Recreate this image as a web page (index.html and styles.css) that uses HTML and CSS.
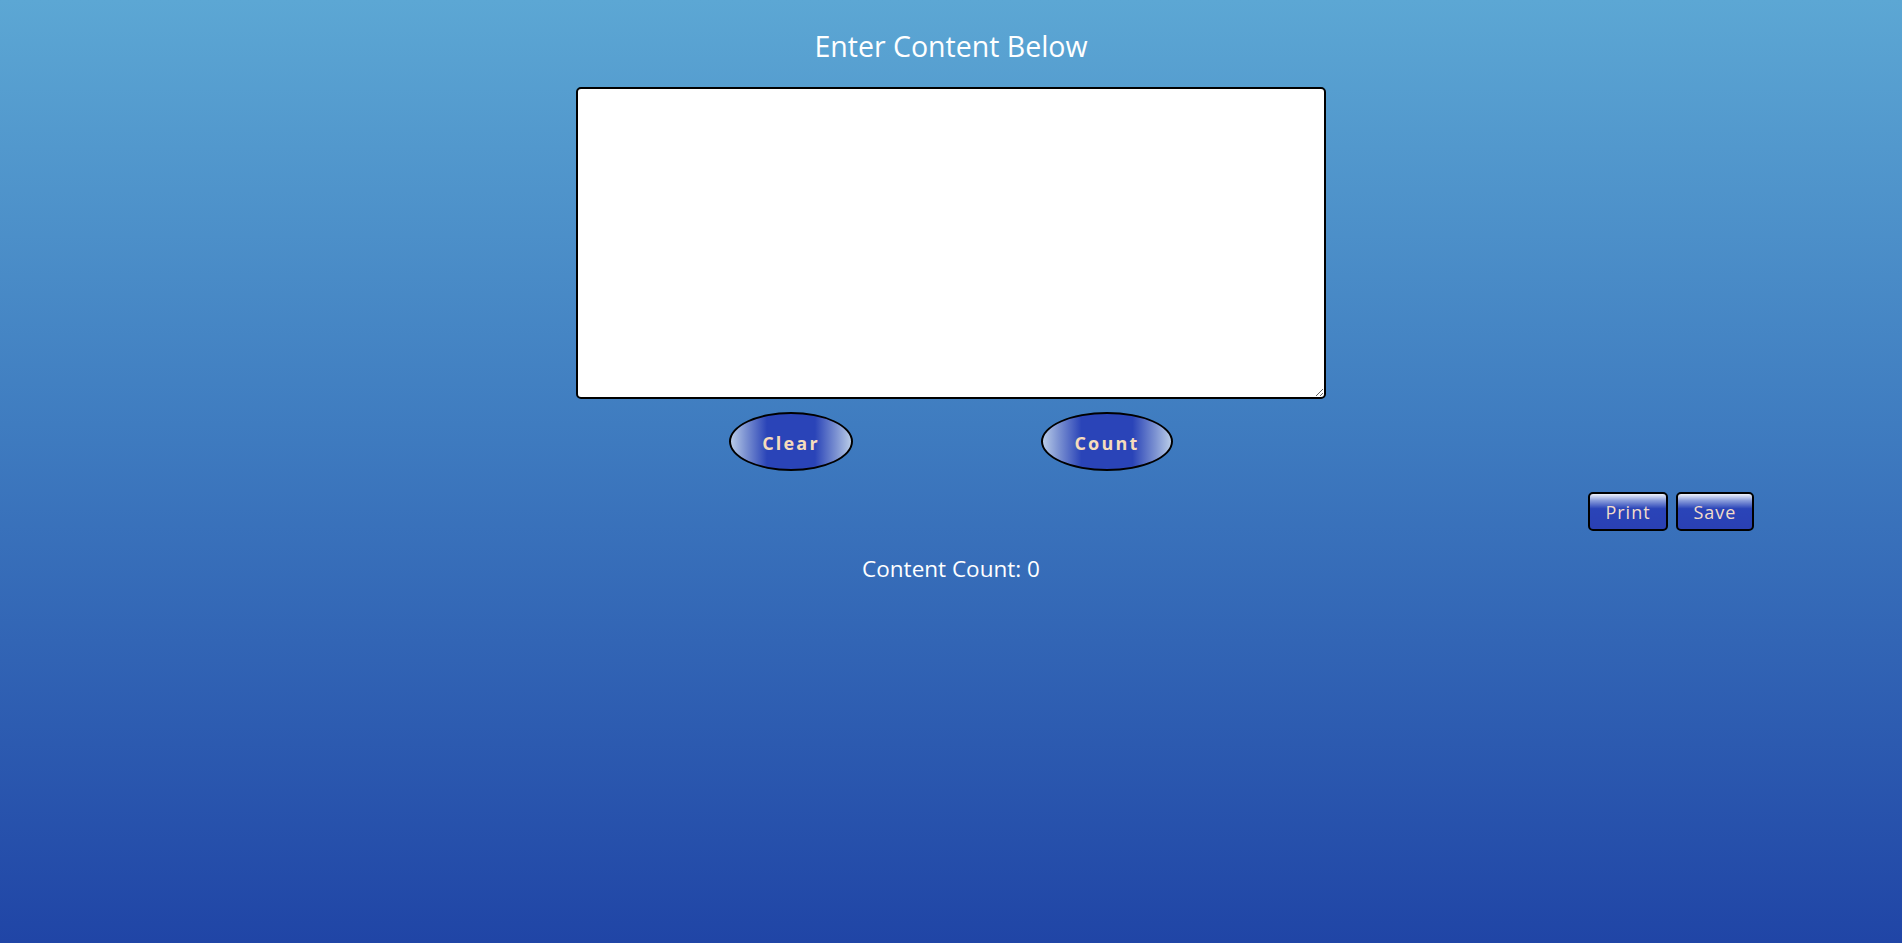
FILE: index.html
```html
<!DOCTYPE html>
<html lang="en">
<head>
<meta charset="utf-8">
<title>Content Counter</title>
<link rel="stylesheet" href="styles.css">
</head>
<body>
<main class="page">
  <h1 class="title">Enter Content Below</h1>
  <textarea class="editor"></textarea>
  <div class="actions">
    <button class="oval-btn clear-btn">Clear</button>
    <button class="oval-btn count-btn">Count</button>
  </div>
  <div class="tools">
    <button class="tool-btn print-btn">Print</button>
    <button class="tool-btn save-btn">Save</button>
  </div>
  <p class="count">Content Count: 0</p>
</main>
</body>
</html>
```
FILE: styles.css
```css
html, body {
  margin: 0;
  padding: 0;
}
body {
  min-height: 100vh;
  background: linear-gradient(to bottom, #5ca7d4 0%, #3f7cc0 45%, #2045a6 100%);
  font-family: "Open Sans", "Noto Sans", sans-serif;
  color: #ffffff;
  overflow: hidden;
}
.page {
  display: flex;
  flex-direction: column;
  align-items: center;
  min-height: 100vh;
  box-sizing: border-box;
}
.title {
  margin: 26px 0 0;
  font-size: 28.5px;
  font-weight: 400;
  line-height: 40px;
}
.editor {
  margin-top: 21px;
  width: 750px;
  height: 312px;
  box-sizing: border-box;
  border: 2px solid #000;
  border-radius: 5px;
  background: #fff;
  padding: 4px;
  font-family: inherit;
}
.actions {
  display: flex;
  gap: 188px;
  margin-top: 13px;
}
.oval-btn {
  height: 59px;
  border: 2px solid #000;
  border-radius: 50%;
  background: linear-gradient(90deg, #b8cbe8 0%, #7d93d2 12%, #2a44b8 30%, #2a44b8 70%, #7d93d2 88%, #b8cbe8 100%);
  color: #f6dcbc;
  font-family: inherit;
  font-size: 18px;
  font-weight: 700;
  letter-spacing: 2.2px;
  padding: 2px 0 0;
}
.clear-btn { width: 124px; }
.count-btn { width: 132px; }
.tools {
  align-self: stretch;
  display: flex;
  justify-content: flex-end;
  gap: 8px;
  padding-right: 148px;
  margin-top: 21px;
}
.tool-btn {
  height: 39px;
  border: 2px solid #000;
  border-radius: 5px;
  background: linear-gradient(to bottom, #eef2fb 0%, #8c9fdc 18%, #2a44b8 42%, #2a40b4 100%);
  color: #f2dccb;
  font-family: inherit;
  font-size: 18px;
  letter-spacing: 1px;
  padding: 0;
}
.print-btn { width: 80px; }
.save-btn { width: 78px; }
.count {
  margin: 23px 0 0;
  font-size: 22.5px;
  line-height: 30px;
}
```
